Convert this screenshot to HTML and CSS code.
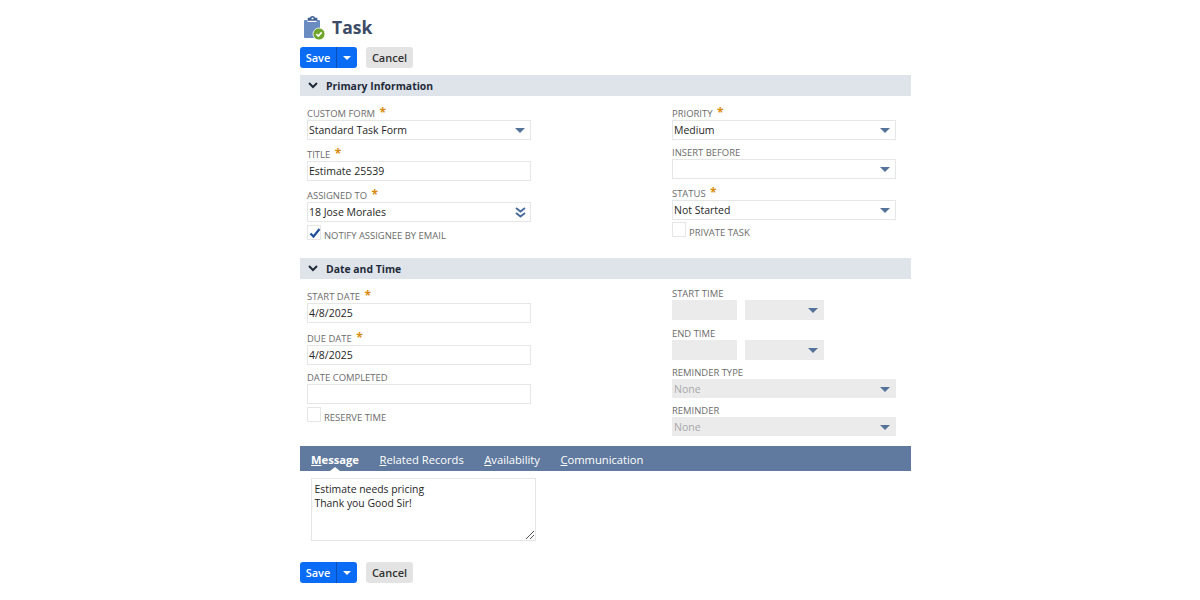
FILE: index.html
```html
<!DOCTYPE html>
<html>
  <head>
    <title>Task</title>
    <link rel="stylesheet" href="styles.css">
  </head>
<body>
<div class="page">
  <div class="title_row">
    <svg class="task_icon" width="23" height="26" viewBox="0 0 23 26">
      <path d="M2 5h2.500v2h9V5H16a1 1 0 0 1 1 1v17H2a1 1 0 0 1-1-1V6a1 1 0 0 1 1-1z" fill="#6a8cc0"/>
      <path d="M5.500 5V3.500h2.200a1.800 1.800 0 0 1 3.600 0h2.200V5z" fill="none" stroke="#3f5f94" stroke-width="1.600"/>
      <circle cx="16" cy="19" r="6" fill="#6fa52c" stroke="#fff" stroke-width="0.800"/>
      <path d="M13.300 19l2 2 3.400-3.600" fill="none" stroke="#fff" stroke-width="1.700"/>
    </svg>
    <h1>Task</h1>
  </div>

  <div class="button_row">
    <div class="save_btn">
      <span class="save_text">Save</span>
      <span class="save_arrow"><i class="arrow_white"></i></span>
    </div>
    <div class="cancel_btn">Cancel</div>
  </div>

  <div class="section_head">
    <svg width="10" height="7" viewBox="0 0 10 7"><path d="M1 1l4 4 4-4" fill="none" stroke="#1f2b3a" stroke-width="2"/></svg>
    <span>Primary Information</span>
  </div>

  <div class="form_columns primary">
    <div class="form_col left_col">
      <div class="field">
        <div class="lbl has_req">CUSTOM FORM <span class="req">*</span></div>
        <div class="input">Standard Task Form<i class="arrow"></i></div>
      </div>
      <div class="field">
        <div class="lbl has_req">TITLE <span class="req">*</span></div>
        <div class="input">Estimate 25539</div>
      </div>
      <div class="field">
        <div class="lbl has_req">ASSIGNED TO <span class="req">*</span></div>
        <div class="input">18 Jose Morales
          <svg class="dbl_arrow" width="11" height="11" viewBox="0 0 11 11"><path d="M1 1l4.500 3.500L10 1M1 6l4.500 3.500L10 6" fill="none" stroke="#4a6d9c" stroke-width="2"/></svg>
        </div>
      </div>
      <div class="check_row">
        <div class="check">
          <svg width="14" height="14" viewBox="0 0 14 14"><path d="M2.500 7.500l3 3 6-7.500" fill="none" stroke="#1f4f9c" stroke-width="2.200"/></svg>
        </div>
        <span>NOTIFY ASSIGNEE BY EMAIL</span>
      </div>
    </div>
    <div class="form_col right_col">
      <div class="field">
        <div class="lbl has_req">PRIORITY <span class="req">*</span></div>
        <div class="input">Medium<i class="arrow"></i></div>
      </div>
      <div class="field">
        <div class="lbl">INSERT BEFORE</div>
        <div class="input"><i class="arrow"></i></div>
      </div>
      <div class="field">
        <div class="lbl has_req">STATUS <span class="req">*</span></div>
        <div class="input">Not Started<i class="arrow"></i></div>
      </div>
      <div class="check_row">
        <div class="check"></div>
        <span>PRIVATE TASK</span>
      </div>
    </div>
  </div>

  <div class="section_head">
    <svg width="10" height="7" viewBox="0 0 10 7"><path d="M1 1l4 4 4-4" fill="none" stroke="#1f2b3a" stroke-width="2"/></svg>
    <span>Date and Time</span>
  </div>

  <div class="form_columns dates">
    <div class="form_col left_col">
      <div class="field">
        <div class="lbl has_req">START DATE <span class="req">*</span></div>
        <div class="input">4/8/2025</div>
      </div>
      <div class="field">
        <div class="lbl has_req">DUE DATE <span class="req">*</span></div>
        <div class="input">4/8/2025</div>
      </div>
      <div class="field">
        <div class="lbl">DATE COMPLETED</div>
        <div class="input"></div>
      </div>
      <div class="check_row">
        <div class="check"></div>
        <span>RESERVE TIME</span>
      </div>
    </div>
    <div class="form_col right_col">
      <div class="field time_field">
        <div class="lbl">START TIME</div>
        <div class="time_pair">
          <div class="input off hour"></div>
          <div class="input off ampm"><i class="arrow"></i></div>
        </div>
      </div>
      <div class="field time_field">
        <div class="lbl">END TIME</div>
        <div class="time_pair">
          <div class="input off hour"></div>
          <div class="input off ampm"><i class="arrow"></i></div>
        </div>
      </div>
      <div class="field">
        <div class="lbl">REMINDER TYPE</div>
        <div class="input off short">None<i class="arrow"></i></div>
      </div>
      <div class="field">
        <div class="lbl">REMINDER</div>
        <div class="input off short">None<i class="arrow"></i></div>
      </div>
    </div>
  </div>

  <div class="tab_bar">
    <span class="tab active"><u>M</u>essage</span>
    <span class="tab"><u>R</u>elated Records</span>
    <span class="tab"><u>A</u>vailability</span>
    <span class="tab"><u>C</u>ommunication</span>
  </div>

  <div class="message_box">Estimate needs pricing<br>Thank you Good Sir!
    <svg class="grip" width="8" height="8" viewBox="0 0 8 8"><path d="M0 8l8-8M4 8l4-4" stroke="#555" stroke-width="1"/></svg>
  </div>

  <div class="button_row bottom">
    <div class="save_btn">
      <span class="save_text">Save</span>
      <span class="save_arrow"><i class="arrow_white"></i></span>
    </div>
    <div class="cancel_btn">Cancel</div>
  </div>
</div>
</body>
</html>
```

FILE: styles.css
```css
body {
  margin: 0;
  background: #fff;
  font-family: "Open Sans", sans-serif;
  font-size: 10.500px;
  color: #262626;
}

.page {
  width: 611px;
  margin-left: 300px;
  padding-top: 15px;
}

.title_row {
  display: flex;
  gap: 6px;
  height: 26px;
  padding-left: 3px;
}

h1 {
  margin: 0;
  font-size: 17.500px;
  font-weight: 700;
  line-height: 25px;
  color: #3c4b66;
}

.button_row {
  display: flex;
  gap: 9px;
  margin-top: 6px;
  height: 21px;
  font-size: 11px;
}

.button_row.bottom {
  margin-top: 21px;
}

.save_btn {
  display: flex;
  background: #0a6cf5;
  border-radius: 3px;
  color: #fff;
  font-weight: 600;
  line-height: 21px;
}

.save_text {
  width: 36px;
  text-align: center;
  border-right: 1px solid #0a4fb8;
}

.save_arrow {
  display: flex;
  width: 20px;
  align-items: center;
  justify-content: center;
}

.arrow_white {
  border-left: 4px solid transparent;
  border-right: 4px solid transparent;
  border-top: 4px solid #fff;
}

.cancel_btn {
  width: 47px;
  background: #e3e3e3;
  border-radius: 3px;
  text-align: center;
  font-weight: 600;
  line-height: 21px;
  color: #333;
}

.section_head {
  display: flex;
  align-items: center;
  gap: 8px;
  height: 21px;
  margin-top: 7px;
  padding-left: 8px;
  background: #dfe4eb;
  font-size: 10.400px;
  font-weight: 700;
  color: #1f2b3a;
}

.form_columns {
  display: flex;
  padding-left: 7px;
}

.form_col {
  width: 224px;
}

.right_col {
  margin-left: 141px;
}

.primary {
  height: 155px;
  padding-top: 9px;
  box-sizing: border-box;
}

.dates {
  height: 167px;
  padding-top: 9px;
  box-sizing: border-box;
}

.field {
  margin-bottom: 6px;
}

.dates .left_col .field {
  margin-bottom: 6.500px;
}

.dates .right_col {
  margin-top: -1px;
}

.dates .time_field {
  margin-bottom: 6.500px;
}

.lbl {
  box-sizing: border-box;
  height: 13px;
  font-size: 9.450px;
  line-height: 13px;
  color: #6b6b6b;
}

.lbl.has_req {
  height: 15px;
  padding-top: 2px;
}

.req {
  color: #d98a0b;
  font-size: 12px;
  font-weight: 700;
  line-height: 0;
  margin-left: 2px;
}

.input {
  position: relative;
  box-sizing: border-box;
  height: 20px;
  padding-left: 1px;
  border: 1px solid #e6e6e6;
  line-height: 18px;
  color: #262626;
}

.input.off {
  background: #ebebeb;
  border-color: #ebebeb;
  color: #a8a8a8;
}

.input.short {
  height: 19px;
  line-height: 19px;
}

.arrow {
  position: absolute;
  right: 5px;
  top: 7px;
  border-left: 5px solid transparent;
  border-right: 5px solid transparent;
  border-top: 5px solid #54729a;
}

.dbl_arrow {
  position: absolute;
  right: 4px;
  top: 4px;
}

.time_pair {
  display: flex;
  gap: 8px;
}

.hour {
  width: 65px;
}

.ampm {
  width: 79px;
}

.check_row {
  display: flex;
  gap: 3px;
  margin-top: -3px;
  font-size: 9.450px;
  color: #6b6b6b;
}

.right_col .check_row {
  margin-top: -4px;
}

.dates .check_row {
  margin-top: -4px;
}

.check {
  box-sizing: border-box;
  width: 14px;
  height: 15px;
  border: 1px solid #e6e6e6;
}

.check_row span {
  line-height: 21px;
}

.tab_bar {
  display: flex;
  gap: 20.500px;
  height: 25px;
  padding-left: 11px;
  background: #5f7a9e;
  color: #fff;
  font-size: 11.200px;
  line-height: 27px;
}

.tab {
  position: relative;
}

.tab.active {
  font-weight: 700;
}

.tab.active::after {
  content: "";
  position: absolute;
  left: 50%;
  bottom: 0;
  margin-left: -5px;
  border-left: 5px solid transparent;
  border-right: 5px solid transparent;
  border-bottom: 4px solid #fff;
}

.message_box {
  position: relative;
  box-sizing: border-box;
  width: 225px;
  height: 63px;
  margin: 7px 0 0 11px;
  padding: 3px 2.500px;
  border: 1px solid #e6e6e6;
  font-size: 10.400px;
  line-height: 14px;
}

.grip {
  position: absolute;
  right: 1px;
  bottom: 1px;
}
```
